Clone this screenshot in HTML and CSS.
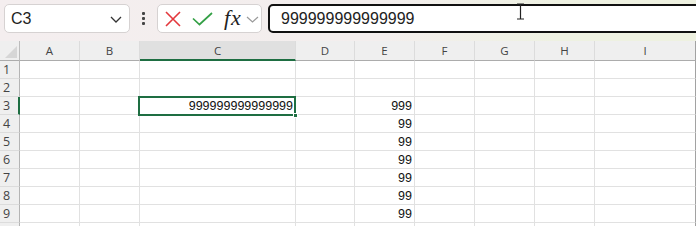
FILE: index.html
```html
<!DOCTYPE html>
<html>
<head>
<meta charset="utf-8">
<link rel="stylesheet" href="styles.css">
</head>
<body>
<div class="toolbar">
  <div class="namebox">
    <span class="name">C3</span>
    <svg class="chev" width="12" height="7" viewBox="0 0 12 7"><polyline points="1,1 6,6 11,1" fill="none" stroke="#333" stroke-width="1.3"/></svg>
  </div>
  <div class="dots"><i></i><i></i><i></i></div>
  <div class="fbtns">
    <svg class="xicon" width="16" height="16" viewBox="0 0 16 16"><path d="M1 1 L15 15 M15 1 L1 15" stroke="#e3383d" stroke-width="1.6" fill="none"/></svg>
    <svg class="check" width="21" height="14" viewBox="0 0 21 14"><polyline points="1,6.5 7.5,12.5 20,1" fill="none" stroke="#34a046" stroke-width="1.7"/></svg>
    <span class="fx">fx</span>
    <svg class="chev2" width="13" height="7" viewBox="0 0 13 7"><polyline points="1,1 6.5,6 12,1" fill="none" stroke="#9a9a9a" stroke-width="1.2"/></svg>
  </div>
  <div class="finput">999999999999999</div>
  <svg class="ibeam" width="9" height="17" viewBox="0 0 9 17"><path d="M1 1 H8 M4.5 1 V16 M1 16 H8" stroke="#222" stroke-width="1.2" fill="none"/></svg>
</div>
<div class="sheet">
  <div class="corner"><span class="tri"></span></div>
  <div class="ch">A</div><div class="ch">B</div><div class="ch sel">C</div><div class="ch">D</div><div class="ch">E</div><div class="ch">F</div><div class="ch">G</div><div class="ch">H</div><div class="ch last">I</div>

  <div class="rh">1</div><div class="c"></div><div class="c"></div><div class="c"></div><div class="c"></div><div class="c"></div><div class="c"></div><div class="c"></div><div class="c"></div><div class="c last"></div>
  <div class="rh">2</div><div class="c"></div><div class="c"></div><div class="c"></div><div class="c"></div><div class="c"></div><div class="c"></div><div class="c"></div><div class="c"></div><div class="c last"></div>
  <div class="rh rsel">3</div><div class="c"></div><div class="c"></div><div class="c num">999999999999999</div><div class="c"></div><div class="c num">999</div><div class="c"></div><div class="c"></div><div class="c"></div><div class="c last"></div>
  <div class="rh">4</div><div class="c"></div><div class="c"></div><div class="c"></div><div class="c"></div><div class="c num">99</div><div class="c"></div><div class="c"></div><div class="c"></div><div class="c last"></div>
  <div class="rh">5</div><div class="c"></div><div class="c"></div><div class="c"></div><div class="c"></div><div class="c num">99</div><div class="c"></div><div class="c"></div><div class="c"></div><div class="c last"></div>
  <div class="rh">6</div><div class="c"></div><div class="c"></div><div class="c"></div><div class="c"></div><div class="c num">99</div><div class="c"></div><div class="c"></div><div class="c"></div><div class="c last"></div>
  <div class="rh">7</div><div class="c"></div><div class="c"></div><div class="c"></div><div class="c"></div><div class="c num">99</div><div class="c"></div><div class="c"></div><div class="c"></div><div class="c last"></div>
  <div class="rh">8</div><div class="c"></div><div class="c"></div><div class="c"></div><div class="c"></div><div class="c num">99</div><div class="c"></div><div class="c"></div><div class="c"></div><div class="c last"></div>
  <div class="rh">9</div><div class="c"></div><div class="c"></div><div class="c"></div><div class="c"></div><div class="c num">99</div><div class="c"></div><div class="c"></div><div class="c"></div><div class="c last"></div>
  <div class="rh end"></div><div class="c end"></div><div class="c end"></div><div class="c end"></div><div class="c end"></div><div class="c end"></div><div class="c end"></div><div class="c end"></div><div class="c end"></div><div class="c end last"></div>

  <div class="selbox"><span class="handle"></span></div>
</div>
</body>
</html>
```

FILE: styles.css
```css
* { box-sizing: border-box; }
html, body { margin: 0; padding: 0; }
body {
  width: 696px;
  height: 226px;
  overflow: hidden;
  background: #fff;
  font-family: "Liberation Sans", Arial, sans-serif;
}
.toolbar {
  position: relative;
  height: 41px;
  display: flex;
  align-items: flex-start;
  padding: 4px 0 0 4px;
  background: linear-gradient(90deg, #f4eeef 0%, #f3eeed 55%, #eef1e2 80%, #eef1e0 100%);
  overflow: hidden;
}
.toolbar > * { flex: none; }
.namebox {
  width: 126px;
  height: 29px;
  background: #fff;
  border: 1px solid #d6d2d2;
  border-radius: 5px;
  display: flex;
  align-items: center;
  justify-content: space-between;
  padding: 0 7px 0 6px;
}
.name { font-size: 16px; color: #1e1e1e; }
.chev { display: block; margin-top: 1px; }
.dots {
  width: 27px;
  height: 29px;
  display: flex;
  flex-direction: column;
  align-items: center;
  justify-content: center;
  gap: 2px;
}
.dots i {
  display: block;
  width: 3px;
  height: 3px;
  background: #444;
  border-radius: 1px;
}
.fbtns {
  width: 105px;
  height: 29px;
  background: #fff;
  border: 1px solid #d6d2d2;
  border-radius: 5px;
  display: flex;
  align-items: center;
  padding-left: 7px;
}
.xicon { display: block; margin-top: 1px; flex: none; }
.check { display: block; margin-left: 11px; flex: none; }
.fx {
  font-family: "Liberation Serif", "Times New Roman", serif;
  font-style: italic;
  font-size: 22px;
  color: #222;
  margin-left: 11px;
  letter-spacing: 1px;
  line-height: 1;
  margin-top: -2px;
}
.chev2 { display: block; margin-left: 4px; margin-top: 2px; flex: none; }
.finput {
  margin-left: 6px;
  width: 440px;
  height: 29px;
  background: #fff;
  border: 2px solid #111;
  border-radius: 5px;
  font-size: 16px;
  color: #222;
  line-height: 25px;
  padding-left: 11px;
}
.ibeam { position: absolute; left: 516px; top: 3px; }

.sheet {
  position: relative;
  display: grid;
  grid-template-columns: 20px 60px 60px 156px 59px 60px 60px 60px 60px 101px;
  grid-template-rows: 20px repeat(9, 18px) 4px;
  width: 696px;
  background: #fff;
}
.corner {
  position: relative;
  background: #efefef;
  border-right: 1px solid #bcbcbc;
  border-bottom: 1px solid #acacac;
}
.tri {
  position: absolute;
  right: 2px;
  bottom: 2px;
  width: 0; height: 0;
  border-left: 12px solid transparent;
  border-bottom: 12px solid #d6d6d6;
}
.ch {
  background: #efefef;
  border-right: 1px solid #dcdcdc;
  border-bottom: 1px solid #acacac;
  font-family: "Open Sans", "Noto Sans", sans-serif;
  font-size: 11.5px;
  color: #444;
  text-align: center;
  line-height: 19px;
}
.ch.sel {
  background: #e0e0e0;
  border-bottom: 2px solid #1e6e42;
}
.ch.last { border-right: 1px solid #a2a2a2; }
.rh {
  background: #efefef;
  border-right: 1px solid #b4b4b4;
  border-bottom: 1px solid #dcdcdc;
  font-family: "Open Sans", "Noto Sans", sans-serif;
  font-size: 12.5px;
  color: #444;
  line-height: 17px;
  padding-left: 3px;
}
.rh.rsel { border-right: 2px solid #1e6e42; }
.c {
  border-right: 1px solid #e1e1e1;
  border-bottom: 1px solid #e1e1e1;
  font-size: 12.5px;
  color: #111;
  line-height: 17px;
  padding-top: 1px;
}
.c.last { border-right: 1px solid #a2a2a2; }
.num { text-align: right; padding-right: 2px; }
.end { border-bottom: 1px solid #a2a2a2; }
.selbox {
  position: absolute;
  left: 138px;
  top: 55px;
  width: 158px;
  height: 20px;
  border: 2px solid #1e6e42;
}
.handle {
  position: absolute;
  right: -4px;
  bottom: -4px;
  width: 5px;
  height: 5px;
  background: #1e6e42;
  border: 1px solid #fff;
}
```
